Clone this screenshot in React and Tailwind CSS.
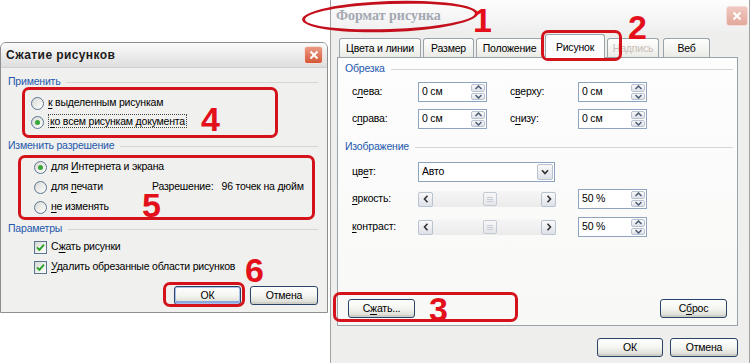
import React from 'react';

function U({ children }) {
  return <span className="underline underline-offset-[2px]">{children}</span>;
}

function Group({ label, className = '' }) {
  return (
    <div className={`flex items-center h-[14px] ${className}`}>
      <span className="text-[#2458ad] whitespace-nowrap">{label}</span>
      <div className="flex-1 h-px bg-[#d6d6d0] ml-[6px]" />
    </div>
  );
}

function Radio({ checked, children, className = '' }) {
  return (
    <div className={`flex items-center h-[18px] ${className}`}>
      <span className="w-[13px] h-[13px] shrink-0 rounded-full border border-[#5d7594] bg-gradient-to-br from-[#d9d9d3] to-white flex items-center justify-center">
        {checked && <span className="w-[5px] h-[5px] rounded-full bg-[#3aa63a]" />}
      </span>
      <span className="ml-[4px] whitespace-nowrap">{children}</span>
    </div>
  );
}

function Check({ children, className = '' }) {
  return (
    <div className={`flex items-center h-[18px] ${className}`}>
      <span className="w-[13px] h-[13px] shrink-0 border border-[#5d7594] bg-gradient-to-br from-[#d9d9d3] to-white flex items-center justify-center">
        <svg width="9" height="9" viewBox="0 0 9 9">
          <path d="M1 4.3 L3.4 6.8 L8 1.6" fill="none" stroke="#22a022" strokeWidth="1.8" />
        </svg>
      </span>
      <span className="ml-[4px] whitespace-nowrap">{children}</span>
    </div>
  );
}

function Button({ children, className = '', def = false }) {
  return (
    <div
      className={`h-[19px] flex items-center justify-center rounded-[3px] border border-[#2a4468] bg-gradient-to-b from-white via-[#f4f4f0] to-[#d9d9d3] ${
        def ? 'shadow-[inset_0_0_0_1px_#a9c0ea,inset_0_-2px_0_1px_#8aa8de]' : 'shadow-[inset_0_-2px_0_#cfcfc8]'
      } ${className}`}
    >
      {children}
    </div>
  );
}

function Arrow({ dir }) {
  const d = {
    up: 'M0.5 4 L3.5 1 L6.5 4',
    down: 'M0.5 1 L3.5 4 L6.5 1',
  }[dir];
  return (
    <svg width="7" height="5" viewBox="0 0 7 5">
      <path d={d} fill="none" stroke="#4a5a74" strokeWidth="1.5" />
    </svg>
  );
}

function Spin({ value }) {
  return (
    <div className="w-[69px] h-[20px] flex items-center border border-[#8ea3bd] bg-white">
      <span className="flex-1 pl-[3px]">{value}</span>
      <div className="w-[15px] h-full flex flex-col gap-px py-px pr-px">
        <div className="flex-1 flex items-center justify-center rounded-[2px] border border-[#b9c2d0] bg-gradient-to-b from-[#fafafa] to-[#dde1e8]">
          <Arrow dir="up" />
        </div>
        <div className="flex-1 flex items-center justify-center rounded-[2px] border border-[#b9c2d0] bg-gradient-to-b from-[#fafafa] to-[#dde1e8]">
          <Arrow dir="down" />
        </div>
      </div>
    </div>
  );
}

function ScrollBtn({ dir }) {
  return (
    <div className="w-[15px] h-[15px] flex items-center justify-center rounded-[2px] border border-[#b9c2d0] bg-gradient-to-b from-[#fafafa] to-[#dde1e8]">
      <svg width="6" height="8" viewBox="0 0 6 8">
        <path d={dir === 'left' ? 'M4.5 0.8 L1.5 4 L4.5 7.2' : 'M1.5 0.8 L4.5 4 L1.5 7.2'} fill="none" stroke="#333" strokeWidth="1.6" />
      </svg>
    </div>
  );
}

function Scroll() {
  return (
    <div className="w-[138px] h-[16px] flex items-center bg-gradient-to-b from-[#f6f6f6] to-[#ebebeb]">
      <ScrollBtn dir="left" />
      <div className="flex-1 flex justify-center pl-[6px]">
        <div className="w-[14px] h-[14px] rounded-[2px] border border-[#c4cad4] bg-gradient-to-b from-[#f8f8f8] to-[#e4e6ea] flex flex-col items-center justify-center gap-px">
          <span className="w-[6px] h-px bg-[#c8ccd4]" />
          <span className="w-[6px] h-px bg-[#c8ccd4]" />
          <span className="w-[6px] h-px bg-[#c8ccd4]" />
        </div>
      </div>
      <ScrollBtn dir="right" />
    </div>
  );
}

function Tab({ children, active = false, disabled = false, className = '' }) {
  return (
    <div
      className={`flex items-center justify-center border border-b-0 border-[#9aa2aa] rounded-t-[3px] whitespace-nowrap leading-[12px] ${
        active
          ? 'h-[24px] -mb-px bg-[#fcfcfe] relative z-10'
          : 'h-[19px] bg-gradient-to-b from-white to-[#ebebe6]'
      } ${disabled ? 'text-[#c9bfb6]' : ''} ${className}`}
    >
      {children}
    </div>
  );
}

function Close({ faded = false, className = '' }) {
  return (
    <div
      className={`flex items-center justify-center rounded-[3px] border ${
        faded ? 'border-[#f2dcd8] bg-gradient-to-b from-[#f0c8c0] to-[#e3a89c]' : 'border-[#f6e0da] bg-gradient-to-b from-[#ec9a84] to-[#d35636]'
      } ${className}`}
    >
      <svg width="10" height="10" viewBox="0 0 10 10">
        <path d="M1.5 1.5 L8.5 8.5 M8.5 1.5 L1.5 8.5" stroke="white" strokeWidth="2" />
      </svg>
    </div>
  );
}

function Num({ children, className = '' }) {
  return (
    <div className={`absolute text-[34px] leading-[26px] tracking-normal font-bold text-[#e3101c] font-['Liberation_Sans',Arial,sans-serif] ${className}`}>
      {children}
    </div>
  );
}

function LeftDialog() {
  return (
    <div className="absolute left-0 top-[42px] w-[328px] h-[271px] border border-[#8e8e8e] rounded-t-[6px] bg-[#f0f0ee] flex flex-col overflow-hidden">
      <div className="h-[25px] shrink-0 flex items-center justify-between pl-[5px] pr-[4px] bg-gradient-to-b from-[#fbfbfb] to-[#dedede] border-b border-[#cfcfcf]">
        <span className="font-bold text-[12px] text-[#1c1c1c] tracking-[0.4px]">Сжатие рисунков</span>
        <Close className="w-[19px] h-[18px]" />
      </div>
      <div className="flex flex-col pl-[7px] pr-[9px] pt-[7px]">
        <Group label="Применить" />
        <Radio className="mt-[5px] ml-[23px]">
          <U>к</U> выделенным рисункам
        </Radio>
        <Radio checked className="mt-px ml-[23px]">
          <span className="border border-dotted border-[#444] px-px">
            <U>к</U>о всем рисункам документа
          </span>
        </Radio>
        <Group label="Изменить разрешение" className="mt-[8px]" />
        <Radio checked className="mt-[5px] ml-[26px]">
          для <U>И</U>нтернета и экрана
        </Radio>
        <div className="flex items-center mt-[2px]">
          <Radio className="ml-[26px] w-[118px]">
            для <U>п</U>ечати
          </Radio>
          <span className="whitespace-nowrap">Разрешение:&nbsp;&nbsp;&nbsp;96 точек на дюйм</span>
        </div>
        <Radio className="mt-[2px] ml-[26px]">
          <U>н</U>е изменять
        </Radio>
        <Group label="Параметры" className="mt-[6px]" />
        <Check className="mt-[2px] ml-[26px]">
          С<U>ж</U>ать рисунки
        </Check>
        <Check className="mt-[2px] ml-[26px]">
          <U>У</U>далить обрезанные области рисунков
        </Check>
        <div className="flex justify-end gap-[9px] mt-[10px]">
          <Button def className="w-[67px]">ОК</Button>
          <Button className="w-[68px]">Отмена</Button>
        </div>
      </div>
    </div>
  );
}

function Row({ label, children, className = '', labelW = 'w-[66px]' }) {
  return (
    <div className={`flex items-center h-[20px] ${className}`}>
      <span className={`${labelW} pl-[7px] box-content whitespace-nowrap`}>{label}</span>
      {children}
    </div>
  );
}

function RightDialog() {
  return (
    <div className="absolute left-[330px] top-0 w-[420px] h-[363px] border-l border-r border-[#a2a2a2] bg-[#eeeeec] flex flex-col">
      <div className="h-[31px] shrink-0 flex items-center justify-between pl-[5px] pr-[1px] bg-gradient-to-b from-[#fdfdfd] to-[#f0f0f0]">
        <span className="font-bold text-[14px] tracking-normal text-[#a4a8b2] font-['Liberation_Serif',serif]">Формат рисунка</span>
        <Close faded className="w-[22px] h-[20px]" />
      </div>
      <div className="flex flex-col pl-[6px] pt-[2px]">
        <div className="flex items-end h-[24px] pl-[2px] gap-[2px]">
          <Tab className="w-[82px]">Цвета и линии</Tab>
          <Tab className="w-[51px]">Размер</Tab>
          <Tab className="w-[67px]">Положение</Tab>
          <Tab active className="w-[60px]">Рисунок</Tab>
          <Tab disabled className="w-[52px]">Надпись</Tab>
          <Tab className="w-[47px] ml-[2px]">Веб</Tab>
        </div>
        <div className="w-[401px] h-[269px] border border-[#9aa2aa] bg-gradient-to-b from-[#fdfdfe] to-[#f8f8f6] flex flex-col pl-[7px] pr-[4px] pt-[4px] pb-[7px]">
          <Group label="Обрезка" />
          <div className="mt-[6px] flex items-center">
            <Row label={<>с<U>л</U>ева:</>}>
              <Spin value="0 см" />
            </Row>
            <Row className="ml-[16px]" labelW="w-[68px]" label={<>с<U>в</U>ерху:</>}>
              <Spin value="0 см" />
            </Row>
          </div>
          <div className="mt-[7px] flex items-center">
            <Row label={<>с<U>п</U>рава:</>}>
              <Spin value="0 см" />
            </Row>
            <Row className="ml-[16px]" labelW="w-[68px]" label={<>с<U>н</U>изу:</>}>
              <Spin value="0 см" />
            </Row>
          </div>
          <Group label="Изображение" className="mt-[11px]" />
          <div className="mt-[8px]">
            <Row label={<>цв<U>е</U>т:</>}>
              <div className="w-[137px] h-[20px] flex items-center border border-[#8ea3bd] bg-white">
                <span className="flex-1 pl-[3px]">Авто</span>
                <div className="w-[16px] h-[16px] mr-px flex items-center justify-center rounded-[2px] border border-[#b9c2d0] bg-gradient-to-b from-[#fafafa] to-[#dde1e8]">
                  <svg width="8" height="6" viewBox="0 0 8 6">
                    <path d="M1 1.2 L4 4.5 L7 1.2" fill="none" stroke="#333" strokeWidth="1.7" />
                  </svg>
                </div>
              </div>
            </Row>
          </div>
          <div className="mt-[7px] flex items-center">
            <Row label={<><U>я</U>ркость:</>}>
              <Scroll />
            </Row>
            <div className="ml-[22px]">
              <Spin value="50 %" />
            </div>
          </div>
          <div className="mt-[8px] flex items-center">
            <Row label={<><U>к</U>онтраст:</>}>
              <Scroll />
            </Row>
            <div className="ml-[22px]">
              <Spin value="50 %" />
            </div>
          </div>
          <div className="flex-1" />
          <div className="flex justify-between pl-[3px] pr-[6px]">
            <Button className="w-[67px]">
              С<U>ж</U>ать...
            </Button>
            <Button className="w-[67px]">
              С<U>б</U>рос
            </Button>
          </div>
        </div>
        <div className="w-[401px] flex justify-end gap-[7px] mt-[12px]">
          <Button className="w-[66px]">ОК</Button>
          <Button className="w-[68px]">Отмена</Button>
        </div>
      </div>
    </div>
  );
}

export default function App() {
  return (
    <div className="relative w-[750px] h-[363px] bg-white overflow-hidden text-[10.5px] tracking-[-0.2px] text-black font-['Liberation_Sans',Arial,sans-serif]">
      <LeftDialog />
      <RightDialog />

      {/* annotations */}
      <div className="absolute left-[302px] top-[1px] w-[176px] h-[31px] rounded-[50%] border-[3px] border-[#c4101c] -rotate-[2deg]" />
      <Num className="left-[473px] top-[7px]">1</Num>
      <div className="absolute left-[541px] top-[30px] w-[81px] h-[31px] rounded-[7px] border-[3px] border-[#d3121c]" />
      <Num className="left-[628px] top-[14px]">2</Num>
      <div className="absolute left-[333px] top-[292px] w-[185px] h-[30px] rounded-[7px] border-[3px] border-[#d3121c]" />
      <Num className="left-[429px] top-[296px]">3</Num>
      <div className="absolute left-[22px] top-[87px] w-[256px] h-[51px] rounded-[7px] border-[3px] border-[#d3121c]" />
      <Num className="left-[201px] top-[106px]">4</Num>
      <div className="absolute left-[18px] top-[155px] w-[297px] h-[65px] rounded-[7px] border-[3px] border-[#d3121c]" />
      <Num className="left-[142px] top-[192px]">5</Num>
      <div className="absolute left-[163px] top-[282px] w-[82px] h-[25px] rounded-[7px] border-[3px] border-[#d3121c]" />
      <Num className="left-[245px] top-[257px]">6</Num>
    </div>
  );
}
